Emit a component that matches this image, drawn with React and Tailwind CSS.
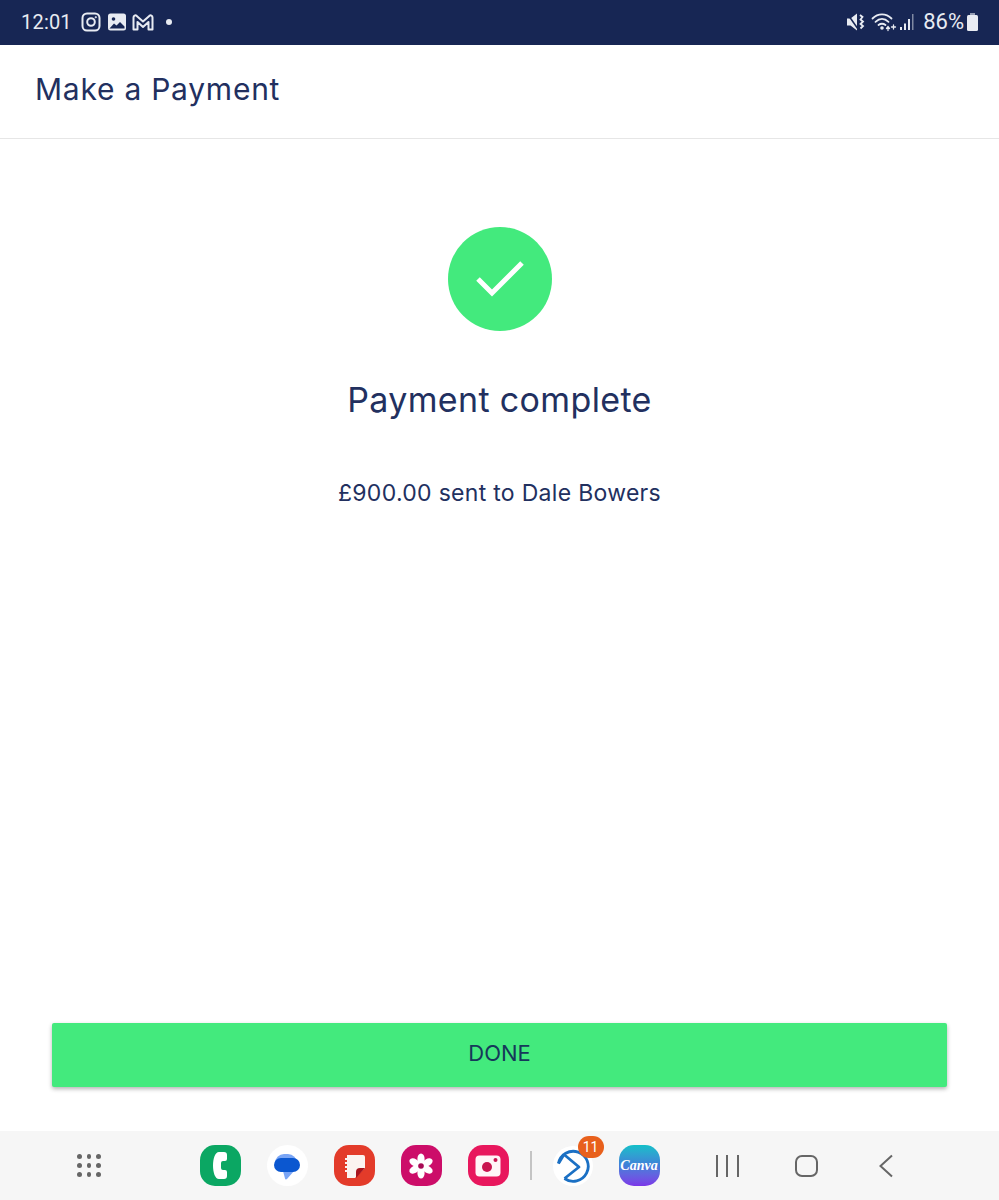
function StatusBar() {
  return (
    <div className="h-[45px] bg-[#172654] flex items-center justify-between pl-[21px] pr-[20px] pb-[1px] text-[#e8ebf2]">
      <div className="flex items-center">
        <span className="text-[20px] font-['Roboto',sans-serif] leading-none tracking-[0.2px]">12:01</span>
        <svg width="20" height="20" viewBox="0 0 20 20" fill="none" stroke="currentColor" strokeWidth="2" className="ml-[9px]">
          <rect x="1.500" y="1.500" width="17" height="17" rx="4.500" />
          <circle cx="10" cy="10" r="3.800" />
          <circle cx="14.800" cy="5.200" r="0.800" fill="currentColor" strokeWidth="0.600" />
        </svg>
        <svg width="20" height="20" viewBox="0 0 20 20" className="ml-[6px]">
          <rect x="1" y="1.500" width="18" height="17" rx="2.500" fill="currentColor" />
          <circle cx="6.500" cy="7" r="1.800" fill="#172654" />
          <path d="M2.500 16.500l4.500-5 2.500 2 3.500-3.500 4.500 4.500v2z" fill="#172654" />
        </svg>
        <svg width="22" height="19" viewBox="0 0 22 19" fill="none" stroke="currentColor" strokeWidth="2" strokeLinejoin="round" className="ml-[5px]">
          <path d="M1.500 16.500V4.500c0-2 1.800-2.700 3.200-1.600L11 8.500l6.300-5.600c1.400-1.100 3.200-.4 3.200 1.600v12h-4V9L11 14 5.500 9v7.500z" />
        </svg>
        <span className="ml-[12px] w-[6px] h-[6px] rounded-full bg-[#e8ebf2]" />
      </div>
      <div className="flex items-center">
        <svg width="19" height="20" viewBox="0 0 19 20" fill="currentColor">
          <path d="M1 6.500h3.500L11 1.500v17L4.500 13.500H1z" />
          <path d="M1.500 2 12 17" stroke="#172654" strokeWidth="1.500" />
          <path d="M14 3l2.500 2-2 2.500 2.500 2-2.500 2.500 2.500 2-2.500 2.500" fill="none" stroke="currentColor" strokeWidth="1.800" />
        </svg>
        <svg width="26" height="20" viewBox="0 0 26 20" fill="none" stroke="currentColor" strokeWidth="1.800" strokeLinecap="round" className="ml-[6px]">
          <path d="M1.500 6.500C7 1 15 1 20.500 6.500" />
          <path d="M4.500 9.800C8.500 6 13.500 6 17.500 9.800" />
          <path d="M7.500 13C9.800 11.300 12.200 11.300 14.500 13" />
          <circle cx="11" cy="16" r="0.900" fill="currentColor" />
          <path d="M15.500 16.500l1.500-2 1.500 2M17 15v3.500M20.500 15h4M22.500 13v4" strokeWidth="1.300" />
        </svg>
        <svg width="16" height="20" viewBox="0 0 16 20" fill="currentColor" className="ml-[2px]">
          <rect x="1" y="15" width="2" height="3" />
          <rect x="5" y="11.500" width="2" height="6.500" />
          <rect x="9" y="7" width="2" height="11" />
          <rect x="13" y="2" width="1.500" height="16" opacity="0.500" />
        </svg>
        <span className="ml-[8px] text-[22px] font-['Roboto',sans-serif] leading-none">86%</span>
        <svg width="13" height="20" viewBox="0 0 13 20" fill="currentColor" className="ml-[2px]">
          <path d="M4 1h5v2H4z" opacity="0.600" />
          <rect x="1" y="3" width="11" height="16" rx="1.500" />
        </svg>
      </div>
    </div>
  )
}

function NavBar() {
  return (
    <div className="h-[69px] bg-[#f6f6f6] relative flex items-center">
      <div className="ml-[77px] grid grid-cols-3 gap-x-[5px] gap-y-[4.500px]">
        {[0, 1, 2, 3, 4, 5, 6, 7, 8].map((i) => (
          <span key={i} className="w-[4.500px] h-[4.500px] rounded-full bg-[#666666]" />
        ))}
      </div>

      <div className="ml-[99px] flex items-center">
        <div className="w-[41px] h-[41px] rounded-[15px] bg-[#0ba763] flex items-center justify-center">
          <svg width="14" height="27" viewBox="3 1.500 14 27">
            <path d="M9 1.500h5a3 3 0 0 1 3 3v4a2 2 0 0 1-2 2h-2a2 2 0 0 0-2 2v5a2 2 0 0 0 2 2h2a2 2 0 0 1 2 2v4a3 3 0 0 1-3 3H9C5 28.500 3 22 3 15S5 1.500 9 1.500z" fill="white" />
          </svg>
        </div>
        <div className="ml-[26px] w-[41px] h-[41px] rounded-full bg-white flex items-center justify-center">
          <svg width="30" height="30" viewBox="0 0 30 30">
            <rect x="3" y="3" width="22" height="18" rx="9" fill="#7aa5f5" />
            <path d="M11 20h11l-7 8c-1 .8-1.800.4-2-.6z" fill="#7aa5f5" />
            <rect x="2" y="7" width="26" height="14" rx="7" fill="#0b57d0" />
          </svg>
        </div>
        <div className="ml-[26px] w-[41px] h-[41px] rounded-[15px] bg-[#e33b2a] flex items-center justify-center">
          <svg width="28" height="28" viewBox="0 0 28 28">
            <path d="M7 3h16a2 2 0 0 1 2 2v11L15 26H7z" fill="#fbf3f0" />
            <path d="M5 7h3M5 11h3M5 15h3M5 19h3" stroke="#fbf3f0" strokeWidth="2" />
            <path d="M16 26v-6a4 4 0 0 1 4-4h5z" fill="#a8141d" />
          </svg>
        </div>
        <div className="ml-[26px] w-[41px] h-[41px] rounded-[15px] bg-[#cc0d69] flex items-center justify-center">
          <svg width="26" height="26" viewBox="0 0 26 26">
            <g fill="white">
              <ellipse cx="13" cy="6" rx="3.600" ry="5.500" />
              <ellipse cx="13" cy="20" rx="3.600" ry="5.500" />
              <ellipse cx="6.500" cy="9.500" rx="5.500" ry="3.600" transform="rotate(30 6.500 9.500)" />
              <ellipse cx="19.500" cy="9.500" rx="5.500" ry="3.600" transform="rotate(-30 19.500 9.500)" />
              <ellipse cx="6.500" cy="16.500" rx="5.500" ry="3.600" transform="rotate(-30 6.500 16.500)" />
              <ellipse cx="19.500" cy="16.500" rx="5.500" ry="3.600" transform="rotate(30 19.500 16.500)" />
            </g>
            <circle cx="13" cy="13" r="2.800" fill="#a80a55" />
          </svg>
        </div>
        <div className="ml-[26px] w-[41px] h-[41px] rounded-[15px] bg-[#e8175d] flex items-center justify-center">
          <svg width="26" height="22" viewBox="0 0 26 22">
            <rect x="0.500" y="0.500" width="25" height="21" rx="4" fill="#fff5f7" />
            <circle cx="12" cy="12" r="5" fill="#c9144f" />
            <circle cx="20.500" cy="5" r="2" fill="#c9144f" />
          </svg>
        </div>
        <div className="ml-[21px] w-[2px] h-[29px] bg-[#c4c4c4]" />
        <div className="relative ml-[21px] w-[40px] h-[40px] rounded-full bg-white flex items-center justify-center">
          <svg width="34" height="34" viewBox="0 0 34 34" fill="none" stroke="#1b70c4" strokeWidth="2.800">
            <path d="M2.500 14.500A15 15 0 1 1 8.500 29.500" />
            <path d="M8 5.500 23 18 8.500 29.500" strokeLinejoin="round" />
            <path d="M2.500 14.500 8 5.500" />
          </svg>
          <span className="absolute -top-[10px] left-[25px] w-[26px] h-[22px] rounded-full bg-[#e8601c] text-white text-[14px] leading-[22px] text-center font-['Roboto',sans-serif]">11</span>
        </div>
        <div className="ml-[26px] w-[41px] h-[41px] rounded-[15px] bg-gradient-to-b from-[#10bfc8] via-[#3f7fd8] to-[#7a35e8] flex items-center justify-center">
          <span className="text-white text-[14px] italic font-bold font-['Liberation_Serif',serif] leading-none">Canva</span>
        </div>
      </div>

      <div className="ml-[56px] flex items-center">
        <div className="flex gap-[8.500px]">
          <span className="w-[2px] h-[22px] bg-[#666666]" />
          <span className="w-[2px] h-[22px] bg-[#666666]" />
          <span className="w-[2px] h-[22px] bg-[#666666]" />
        </div>
        <div className="ml-[56px] w-[23px] h-[22px] rounded-[7px] border-2 border-[#666666]" />
        <svg width="16" height="24" viewBox="0 0 16 24" fill="none" stroke="#666666" strokeWidth="2" className="ml-[60px]">
          <path d="M14 1.500 2.500 12 14 22.500" />
        </svg>
      </div>
    </div>
  )
}

export default function App() {
  return (
    <div className="w-[999px] h-[1200px] flex flex-col bg-white font-['Inter',sans-serif] text-[#22305f] overflow-hidden">
      <StatusBar />
      <header className="h-[94px] border-b border-[#e6e6e6] flex items-center pl-[35px] pb-[6px]">
        <h1 className="text-[30px] font-normal leading-none tracking-[0.75px]">Make a Payment</h1>
      </header>

      <main className="flex-1 flex flex-col items-center">
        <div className="mt-[88px] w-[104px] h-[104px] rounded-full bg-[#43ea7d] flex items-center justify-center">
          <svg width="48" height="36" viewBox="0 0 48 36" fill="none" stroke="white" strokeWidth="5">
            <path d="M2 18 16 32 46 2" />
          </svg>
        </div>
        <h2 className="mt-[47px] text-[34px] font-normal leading-[44px] tracking-[0.35px]">Payment complete</h2>
        <p className="mt-[56px] text-[23px] leading-[30px] tracking-[0.3px]">£900.00 sent to Dale Bowers</p>

        <button className="mt-auto mb-[44px] w-[895px] h-[64px] rounded-[2px] bg-[#43ea7d] shadow-[0_2px_4px_rgba(0,0,0,0.3)] text-[22px] font-normal text-[#16385a] uppercase pb-[3px]">
          Done
        </button>
      </main>

      <NavBar />
    </div>
  )
}
